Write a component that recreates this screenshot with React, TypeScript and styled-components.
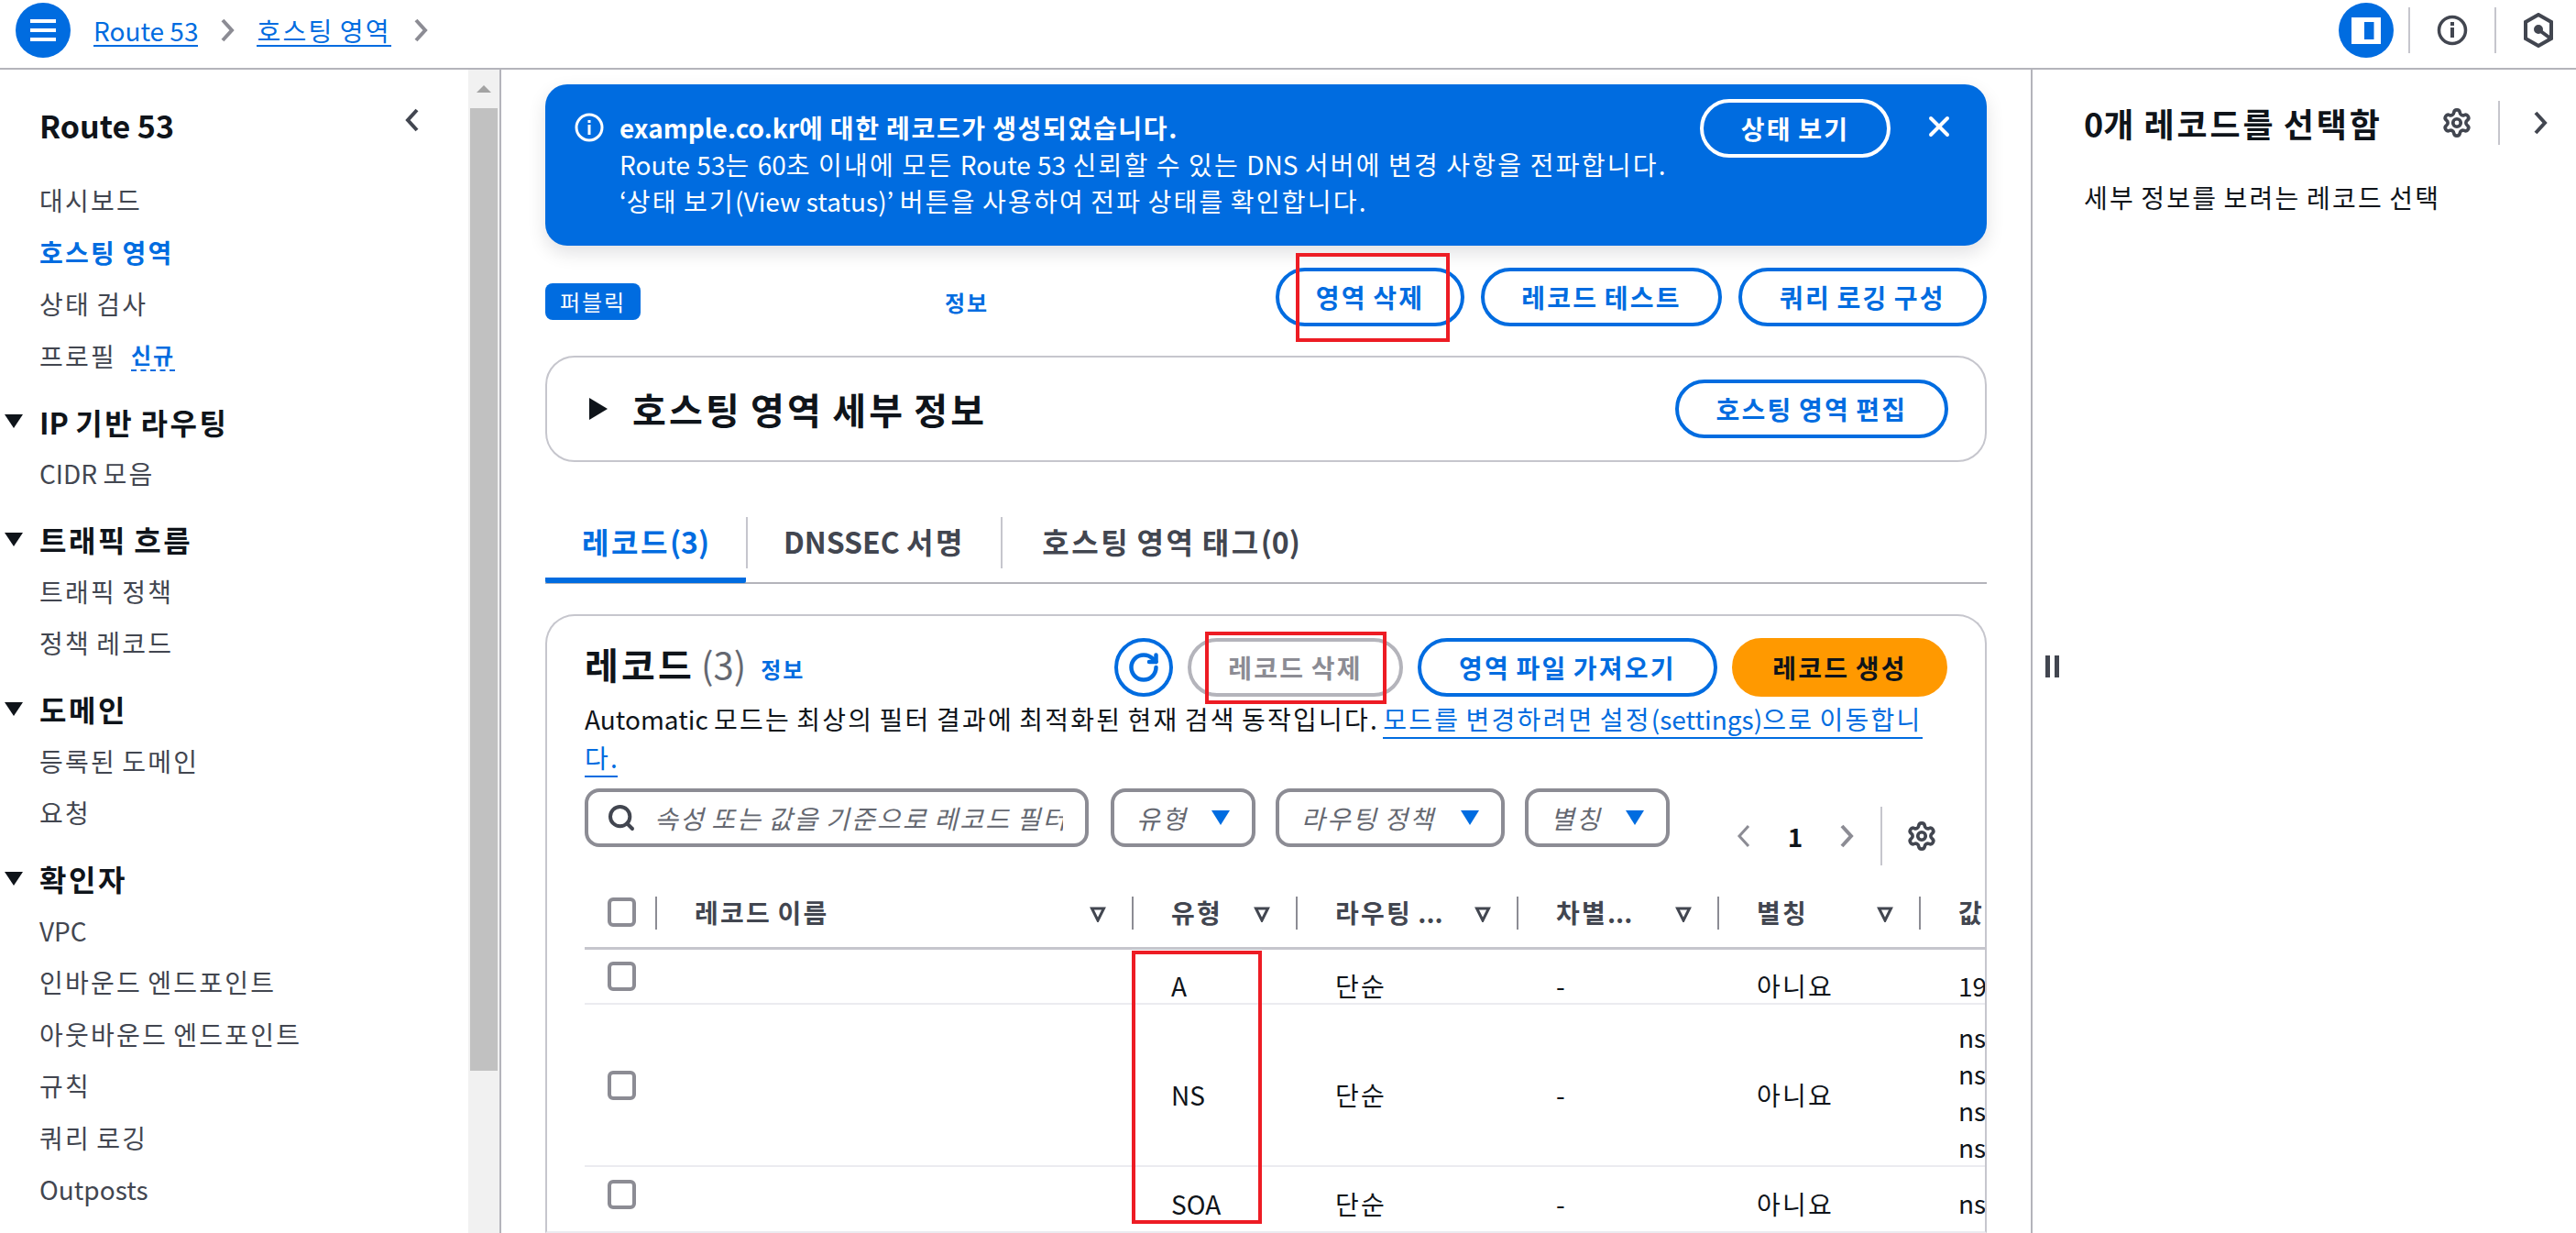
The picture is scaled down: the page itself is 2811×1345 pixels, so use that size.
import React from 'react';
import styled, { createGlobalStyle } from 'styled-components';
import { RotateCw, Search, Settings, X } from 'lucide-react';

const BLUE = '#006ce0';
const INK = '#0f141a';
const SLATE = '#424650';
const LINE = '#b4b4bb';

const GlobalStyle = createGlobalStyle`
    html, body {
        margin: 0;
        height: 100%;
        overflow: hidden;
        background: #fff;
    }
    body {
        font-family: "Noto Sans CJK KR", "Noto Sans", sans-serif;
        font-size: 28px;
        line-height: 40px;
        color: ${INK};
    }
    * { box-sizing: border-box; }
`;

// hangul runs sit wider than the latin ones in this console font
const Hangul = styled.span`
    letter-spacing: 0.08em;
`;

const T = ({ children }: { children: string }) => (
    <span>
        {children.split(/([가-힣]+)/).map((part, i) =>
            i % 2 ? <Hangul key={i}>{part}</Hangul> : part
        )}
    </span>
);

const Page = styled.div`
    width: 2811px;
    height: 1345px;
    display: flex;
    flex-direction: column;
    overflow: hidden;
`;

/* top bar */
const TopBar = styled.header`
    height: 76px;
    flex: none;
    display: flex;
    align-items: flex-start;
    border-bottom: 2px solid ${LINE};
`;

const RoundIcon = styled.div<{ $ml: number }>`
    width: 60px;
    height: 60px;
    margin: 3px 0 0 ${p => p.$ml}px;
    border-radius: 50%;
    background: ${BLUE};
    display: flex;
    align-items: center;
    justify-content: center;
    flex: none;
`;

const Crumbs = styled.nav`
    display: flex;
    align-items: center;
    height: 66px;
    margin-left: 25px;
    color: ${BLUE};
`;

const Crumb = styled.span`
    border-bottom: 2px solid ${BLUE};
    line-height: 32px;
    height: 34px;
    margin-top: 2px;
`;

const CrumbChevron = styled.svg`
    width: 16px;
    height: 28px;
    margin: 0 24px;
`;

const TopRight = styled.div`
    margin-left: auto;
    margin-right: -5px;
    display: flex;
    align-items: flex-start;
`;

const TopDivider = styled.div<{ $ml?: number }>`
    width: 2px;
    height: 50px;
    background: #c6c6cd;
    margin: 8px 0 0 ${p => p.$ml ?? 0}px;
`;

const TopIconSlot = styled.div`
    width: 92px;
    height: 66px;
    display: flex;
    align-items: center;
    justify-content: center;
`;

/* body */
const Body = styled.div`
    flex: 1;
    display: flex;
    min-height: 0;
`;

const Sidebar = styled.aside`
    width: 547px;
    flex: none;
    display: flex;
    border-right: 2px solid ${LINE};
`;

const SideContent = styled.div`
    width: 511px;
    flex: none;
    padding-left: 43px;
`;

const SideHead = styled.div`
    height: 114px;
    padding: 41px 53px 0 0;
    display: flex;
    justify-content: space-between;
    align-items: flex-start;
`;

const SideTitle = styled.div`
    font-size: 34px;
    line-height: 40px;
    font-weight: 700;
`;

const NavItem = styled.div<{ $active?: boolean }>`
    height: 56.5px;
    display: flex;
    align-items: center;
    gap: 16px;
    color: ${p => (p.$active ? BLUE : SLATE)};
    font-weight: ${p => (p.$active ? 700 : 400)};
`;

const NewTag = styled.span`
    color: ${BLUE};
    font-weight: 700;
    font-size: 24px;
    line-height: 32px;
    border-bottom: 2px dashed ${BLUE};
`;

const SectionHead = styled.div`
    position: relative;
    height: 57px;
    margin-top: 15px;
    display: flex;
    align-items: center;
    font-size: 32px;
    font-weight: 700;
`;

const SectionCaret = styled.svg`
    position: absolute;
    left: -38px;
    top: 21px;
    width: 20px;
    height: 15px;
`;

const ScrollTrack = styled.div`
    width: 34px;
    flex: none;
    background: #f1f1f1;
    display: flex;
    flex-direction: column;
    align-items: center;
`;

const ScrollArrow = styled.div`
    width: 0;
    height: 0;
    margin-top: 17px;
    border-left: 8px solid transparent;
    border-right: 8px solid transparent;
    border-bottom: 8px solid #a3a3a3;
`;

const ScrollThumb = styled.div`
    width: 30px;
    height: 1050px;
    margin-top: 17px;
    background: #c1c1c1;
`;

/* main column */
const Main = styled.main`
    width: 1671px;
    flex: none;
    padding: 16px 48px 0 48px;
    overflow: hidden;
    border-right: 2px solid ${LINE};
    position: relative;
`;

const Flash = styled.div`
    height: 176px;
    border-radius: 24px;
    background: ${BLUE};
    color: #fff;
    display: flex;
    padding: 16px 34px 0 32px;
    box-shadow: 0 8px 20px rgba(0, 7, 22, 0.12);
`;

const FlashIcon = styled.svg`
    width: 32px;
    height: 32px;
    margin: 15px 17px 0 0;
    flex: none;
`;

const FlashText = styled.div`
    flex: 1;
    padding-top: 11px;
    line-height: 40px;
    white-space: nowrap;
`;

const FlashTitle = styled.div`
    font-weight: 700;
    ${Hangul} {
        letter-spacing: 0.06em;
    }
`;

const FlashLine = styled.div`
    word-spacing: 1px;
`;

const FlashButton = styled.div`
    width: 208px;
    height: 64px;
    border: 4px solid #fff;
    border-radius: 32px;
    display: flex;
    align-items: center;
    justify-content: center;
    font-weight: 700;
`;

const FlashClose = styled.div`
    margin: 12px 0 0 35px;
    display: flex;
`;

const ActionRow = styled.div`
    display: flex;
    margin-top: 24px;
    height: 64px;
`;

const Badge = styled.div`
    width: 104px;
    height: 40px;
    margin-top: 17px;
    border-radius: 8px;
    background: ${BLUE};
    color: #fff;
    font-size: 24px;
    line-height: 40px;
    text-align: center;
`;

const InfoLink = styled.span<{ $ml: number; $mt: number }>`
    margin: ${p => p.$mt}px 0 0 ${p => p.$ml}px;
    font-size: 24px;
    line-height: 32px;
    font-weight: 700;
    color: ${BLUE};
`;

const ActionButtons = styled.div`
    margin-left: auto;
    display: flex;
    gap: 18px;
`;

const Btn = styled.div<{ $w: number; $tone?: 'normal' | 'disabled' | 'primary' }>`
    position: relative;
    width: ${p => p.$w}px;
    height: 64px;
    flex: none;
    border-radius: 32px;
    border: 4px solid ${p => (p.$tone === 'disabled' ? LINE : p.$tone === 'primary' ? '#ff9900' : BLUE)};
    background: ${p => (p.$tone === 'primary' ? '#ff9900' : '#fff')};
    color: ${p => (p.$tone === 'disabled' ? '#8c8c94' : p.$tone === 'primary' ? INK : BLUE)};
    font-weight: 700;
    white-space: nowrap;
    display: flex;
    align-items: center;
    justify-content: center;
`;

const RedMark = styled.div<{ $l: number; $t: number; $w: number; $h: number }>`
    position: absolute;
    left: ${p => p.$l}px;
    top: ${p => p.$t}px;
    width: ${p => p.$w}px;
    height: ${p => p.$h}px;
    border: 4px solid #ed1c24;
    pointer-events: none;
`;

const DetailsBox = styled.div`
    height: 116px;
    margin-top: 32px;
    border: 2px solid #c6c6cd;
    border-radius: 32px;
    display: flex;
    align-items: center;
    padding: 0 40px 0 46px;
`;

const DetailsCaret = styled.svg`
    width: 20px;
    height: 24px;
    margin-right: 27px;
    flex: none;
`;

const DetailsTitle = styled.div`
    font-size: 40px;
    line-height: 48px;
    font-weight: 700;
    flex: 1;
`;

const Tabs = styled.div`
    height: 89px;
    margin-top: 44px;
    display: flex;
    align-items: flex-start;
    border-bottom: 2px solid ${LINE};
`;

const Tab = styled.div<{ $active?: boolean; $w: number }>`
    width: ${p => p.$w}px;
    height: 88px;
    padding-top: 22px;
    text-align: center;
    font-size: 32px;
    font-weight: 700;
    white-space: nowrap;
    color: ${p => (p.$active ? BLUE : SLATE)};
    border-bottom: 6px solid ${p => (p.$active ? BLUE : 'transparent')};
    border-radius: 0 0 2px 2px;
`;

const TabDivider = styled.div`
    width: 2px;
    height: 56px;
    margin-top: 16px;
    background: #c6c6cd;
`;

const Records = styled.section`
    margin-top: 33px;
    height: 675px;
    border: 2px solid #c6c6cd;
    border-bottom: 2px solid #ebebf0;
    border-radius: 32px 32px 0 0;
    padding: 24px 41px 0 41px;
    overflow: hidden;
    position: relative;
`;

const RecordsHead = styled.div`
    display: flex;
    height: 64px;
    align-items: flex-start;
`;

const RecordsTitle = styled.div`
    font-size: 40px;
    line-height: 56px;
    font-weight: 700;
`;

const Count = styled.span`
    font-weight: 400;
    color: #656871;
    margin-left: 7px;
`;

const RoundBtn = styled.div`
    width: 64px;
    height: 64px;
    flex: none;
    border: 4px solid ${BLUE};
    border-radius: 50%;
    color: ${BLUE};
    display: flex;
    align-items: center;
    justify-content: center;
`;

const HeadButtons = styled.div`
    margin-left: auto;
    display: flex;
    gap: 16px;
`;

const Description = styled.p`
    margin: 3px 0 0;
    width: 1470px;
    font-size: 28px;
    line-height: 42px;
    color: ${INK};
`;

const DescLink = styled.span`
    color: ${BLUE};
    border-bottom: 2px solid ${BLUE};
`;

const FilterRow = styled.div`
    display: flex;
    align-items: flex-start;
    margin-top: 13px;
`;

const FilterBox = styled.div<{ $w: number; $ml: number }>`
    width: ${p => p.$w}px;
    height: 64px;
    margin-left: ${p => p.$ml}px;
    flex: none;
    border: 4px solid #8c8c94;
    border-radius: 16px;
    display: flex;
    align-items: center;
    padding: 0 24px;
    overflow: hidden;
    color: #656871;
    font-style: italic;
    white-space: nowrap;
`;

const SearchBox = styled(FilterBox)`
    padding: 0 24px 0 20px;
`;

const SearchPlaceholder = styled.span`
    margin-left: 20px;
    flex: 1;
    overflow: hidden;
`;

const SelectCaret = styled.svg`
    width: 20px;
    height: 16px;
    margin-left: auto;
    flex: none;
`;

const Pager = styled.div`
    margin: 20px 0 0 73px;
    height: 64px;
    display: flex;
    align-items: center;
    font-weight: 700;
`;

const PagerNum = styled.span`
    width: 96px;
    text-align: center;
`;

const PagerDivider = styled.div`
    width: 2px;
    height: 64px;
    margin-left: 29px;
    background: #c6c6cd;
`;

const PagerGear = styled.div`
    margin-left: 26px;
    display: flex;
    color: ${SLATE};
`;

const TableWrap = styled.div`
    position: relative;
    margin: 12px -41px 0 0;
`;

const COLUMNS = '79px 520px 179px 241px 219px 220px 1fr';

const HeadRow = styled.div`
    height: 80px;
    display: grid;
    grid-template-columns: ${COLUMNS};
    border-bottom: 3px solid #c6c6cd;
`;

const HeadCell = styled.div`
    position: relative;
    padding-left: 41px;
    display: flex;
    align-items: center;
    font-weight: 700;
    color: ${SLATE};
    white-space: nowrap;
    &::after {
        content: '';
        position: absolute;
        left: -2px;
        top: 22px;
        width: 2px;
        height: 36px;
        background: #8c8c94;
    }
`;

const CheckCell = styled.div`
    display: flex;
    align-items: center;
    padding-left: 25px;
`;

const SortIcon = styled.svg`
    position: absolute;
    right: 30px;
    top: 32px;
    width: 18px;
    height: 18px;
`;

const Check = styled.div`
    width: 31px;
    height: 32px;
    border: 4px solid #8c8c94;
    border-radius: 6px;
    flex: none;
`;

const Row = styled.div<{ $h: number; $last?: boolean }>`
    height: ${p => p.$h}px;
    display: grid;
    grid-template-columns: ${COLUMNS};
    border-bottom: ${p => (p.$last ? 'none' : '2px solid #ebebf0')};
`;

const Cell = styled.div`
    align-self: center;
    height: 58px;
    padding: 19px 0 0 41px;
    line-height: 40px;
    white-space: nowrap;
`;

const ValueCell = styled.div<{ $multi?: boolean }>`
    padding: ${p => (p.$multi ? '15px' : '19px')} 0 0 41px;
    line-height: 40px;
    white-space: nowrap;
    overflow: hidden;
`;

/* split panel */
const SplitPanel = styled.aside`
    flex: 1;
    position: relative;
    padding: 34px 0 0 56px;
`;

const SplitHandle = styled.div`
    position: absolute;
    left: 14px;
    top: 639px;
    display: flex;
    gap: 5px;
`;

const HandleBar = styled.div`
    width: 5px;
    height: 24px;
    background: ${SLATE};
`;

const SplitHead = styled.div`
    display: flex;
    align-items: center;
    height: 48px;
`;

const SplitTitle = styled.div`
    font-size: 36px;
    line-height: 44px;
    font-weight: 700;
    white-space: nowrap;
`;

const SplitGear = styled.div`
    margin-left: 64px;
    display: flex;
    color: ${SLATE};
`;

const SplitDivider = styled.div`
    width: 2px;
    height: 48px;
    margin-left: 28px;
    background: #c6c6cd;
`;

const SplitChevron = styled.svg`
    width: 16px;
    height: 28px;
    margin-left: 36px;
`;

const SplitText = styled.p`
    margin: 37px 0 0;
    white-space: nowrap;
`;

const Chevron = ({ color = '#8c8c94' }: { color?: string }) => (
    <path d="M3 3l10 11L3 25" fill="none" stroke={color} strokeWidth="4" />
);

const Caret = () => (
    <SectionCaret viewBox="0 0 20 15">
        <path d="M0 0h20L10 15z" fill={INK} />
    </SectionCaret>
);

const Sort = () => (
    <SortIcon viewBox="0 0 18 18">
        <path d="M2.5 3h13L9 16z" fill="none" stroke={SLATE} strokeWidth="3" />
    </SortIcon>
);

const BlueCaret = () => (
    <SelectCaret viewBox="0 0 20 16">
        <path d="M0 0h20L10 16z" fill={BLUE} />
    </SelectCaret>
);

const sections = [
    { title: 'IP 기반 라우팅', items: ['CIDR 모음'] },
    { title: '트래픽 흐름', items: ['트래픽 정책', '정책 레코드'] },
    { title: '도메인', items: ['등록된 도메인', '요청'] },
    {
        title: '확인자',
        items: ['VPC', '인바운드 엔드포인트', '아웃바운드 엔드포인트', '규칙', '쿼리 로깅', 'Outposts'],
    },
];

const columns = ['라우팅 ...', '차별...', '별칭'];

const rows = [
    { h: 60, type: 'A', value: ['19'] },
    { h: 177, type: 'NS', value: ['ns', 'ns', 'ns', 'ns'] },
    { h: 60, type: 'SOA', value: ['ns'], last: true },
];

const App = (): JSX.Element => {
    return (
        <Page>
            <GlobalStyle />
            <TopBar>
                <RoundIcon $ml={17}>
                    <svg width="28" height="24" viewBox="0 0 28 24">
                        <path d="M0 2h28M0 12h28M0 22h28" stroke="#fff" strokeWidth="4" />
                    </svg>
                </RoundIcon>
                <Crumbs>
                    <Crumb>Route 53</Crumb>
                    <CrumbChevron viewBox="0 0 16 28"><Chevron /></CrumbChevron>
                    <Crumb><T>호스팅 영역</T></Crumb>
                    <CrumbChevron viewBox="0 0 16 28"><Chevron /></CrumbChevron>
                </Crumbs>
                <TopRight>
                    <RoundIcon $ml={0}>
                        <svg width="32" height="29" viewBox="0 0 32 29">
                            <path d="M0 0h32v29H0zM14 5v19h10.500V5z" fill="#fff" fillRule="evenodd" />
                        </svg>
                    </RoundIcon>
                    <TopDivider $ml={16} />
                    <TopIconSlot>
                        <svg width="34" height="34" viewBox="0 0 34 34" fill="none" stroke={SLATE} strokeWidth="3.5">
                            <circle cx="17" cy="17" r="14.5" />
                            <path d="M17 14v11" strokeWidth="4" />
                            <path d="M17 8v4" strokeWidth="4" />
                        </svg>
                    </TopIconSlot>
                    <TopDivider />
                    <TopIconSlot>
                        <svg width="32" height="38" viewBox="0 0 32 38" fill="none" stroke={SLATE} strokeWidth="4">
                            <path d="M16 2l14 8v18l-14 8-14-8V10z" />
                            <circle cx="16" cy="18" r="3" fill={SLATE} />
                            <path d="M17 19l11 8" />
                        </svg>
                    </TopIconSlot>
                </TopRight>
            </TopBar>
            <Body>
                <Sidebar>
                    <SideContent>
                        <SideHead>
                            <SideTitle>Route 53</SideTitle>
                            <svg width="16" height="28" viewBox="0 0 16 28">
                                <path d="M13 3L3 14l10 11" fill="none" stroke={SLATE} strokeWidth="4" />
                            </svg>
                        </SideHead>
                        <NavItem><T>대시보드</T></NavItem>
                        <NavItem $active><T>호스팅 영역</T></NavItem>
                        <NavItem><T>상태 검사</T></NavItem>
                        <NavItem><T>프로필</T> <NewTag><T>신규</T></NewTag></NavItem>
                        {sections.map(s => (
                            <div key={s.title}>
                                <SectionHead><Caret /><T>{s.title}</T></SectionHead>
                                {s.items.map(i => <NavItem key={i}><T>{i}</T></NavItem>)}
                            </div>
                        ))}
                    </SideContent>
                    <ScrollTrack>
                        <ScrollArrow />
                        <ScrollThumb />
                    </ScrollTrack>
                </Sidebar>
                <Main>
                    <Flash>
                        <FlashIcon viewBox="0 0 32 32" fill="none" stroke="#fff" strokeWidth="3">
                            <circle cx="16" cy="16" r="14" />
                            <path d="M16 13v11M16 8v3" />
                        </FlashIcon>
                        <FlashText>
                            <FlashTitle><T>example.co.kr에 대한 레코드가 생성되었습니다.</T></FlashTitle>
                            <FlashLine><T>Route 53는 60초 이내에 모든 Route 53 신뢰할 수 있는 DNS 서버에 변경 사항을 전파합니다.</T></FlashLine>
                            <div><T>‘상태 보기(View status)’ 버튼을 사용하여 전파 상태를 확인합니다.</T></div>
                        </FlashText>
                        <FlashButton><T>상태 보기</T></FlashButton>
                        <FlashClose><X size={36} strokeWidth={2.6} color="#fff" /></FlashClose>
                    </Flash>
                    <ActionRow>
                        <Badge><T>퍼블릭</T></Badge>
                        <InfoLink $ml={332} $mt={22}><T>정보</T></InfoLink>
                        <ActionButtons>
                            <Btn $w={206}>
                                <T>영역 삭제</T>
                                <RedMark $l={18} $t={-20} $w={168} $h={97} />
                            </Btn>
                            <Btn $w={263}><T>레코드 테스트</T></Btn>
                            <Btn $w={271}><T>쿼리 로깅 구성</T></Btn>
                        </ActionButtons>
                    </ActionRow>
                    <DetailsBox>
                        <DetailsCaret viewBox="0 0 20 24"><path d="M0 0l20 12L0 24z" fill={INK} /></DetailsCaret>
                        <DetailsTitle><T>호스팅 영역 세부 정보</T></DetailsTitle>
                        <Btn $w={298}><T>호스팅 영역 편집</T></Btn>
                    </DetailsBox>
                    <Tabs>
                        <Tab $active $w={219}><T>레코드(3)</T></Tab>
                        <TabDivider />
                        <Tab $w={276}><T>DNSSEC 서명</T></Tab>
                        <TabDivider />
                        <Tab $w={368}><T>호스팅 영역 태그(0)</T></Tab>
                    </Tabs>
                    <Records>
                        <RecordsHead>
                            <RecordsTitle><T>레코드</T><Count>(3)</Count></RecordsTitle>
                            <InfoLink $ml={16} $mt={18}><T>정보</T></InfoLink>
                            <HeadButtons>
                                <RoundBtn><RotateCw size={36} strokeWidth={3} /></RoundBtn>
                                <Btn $w={235} $tone="disabled">
                                    <T>레코드 삭제</T>
                                    <RedMark $l={15} $t={-11} $w={198} $h={79} />
                                </Btn>
                                <Btn $w={327}><T>영역 파일 가져오기</T></Btn>
                                <Btn $w={235} $tone="primary"><T>레코드 생성</T></Btn>
                            </HeadButtons>
                        </RecordsHead>
                        <Description>
                            <T>Automatic 모드는 최상의 필터 결과에 최적화된 현재 검색 동작입니다. </T><DescLink><T>모드를 변경하려면 설정(settings)으로 이동합니다.</T></DescLink>
                        </Description>
                        <FilterRow>
                            <SearchBox $w={550} $ml={0}>
                                <Search size={32} strokeWidth={3} color={SLATE} style={{ flex: 'none' }} />
                                <SearchPlaceholder><T>속성 또는 값을 기준으로 레코드 필터링</T></SearchPlaceholder>
                            </SearchBox>
                            <FilterBox $w={158} $ml={24}><T>유형</T><BlueCaret /></FilterBox>
                            <FilterBox $w={250} $ml={22}><T>라우팅 정책</T><BlueCaret /></FilterBox>
                            <FilterBox $w={158} $ml={22}><T>별칭</T><BlueCaret /></FilterBox>
                            <Pager>
                                <svg width="16" height="28" viewBox="0 0 16 28">
                                    <path d="M13 3L3 14l10 11" fill="none" stroke="#8c8c94" strokeWidth="3" />
                                </svg>
                                <PagerNum>1</PagerNum>
                                <svg width="16" height="28" viewBox="0 0 16 28"><Chevron /></svg>
                                <PagerDivider />
                                <PagerGear><Settings size={34} strokeWidth={2.6} /></PagerGear>
                            </Pager>
                        </FilterRow>
                        <TableWrap>
                            <HeadRow>
                                <CheckCell><Check /></CheckCell>
                                <HeadCell><T>레코드 이름</T><Sort /></HeadCell>
                                <HeadCell><T>유형</T><Sort /></HeadCell>
                                {columns.map(c => <HeadCell key={c}><T>{c}</T><Sort /></HeadCell>)}
                                <HeadCell><T>값</T></HeadCell>
                            </HeadRow>
                            {rows.map(r => (
                                <Row key={r.type} $h={r.h} $last={r.last}>
                                    <CheckCell><Check /></CheckCell>
                                    <div />
                                    <Cell>{r.type}</Cell>
                                    <Cell><T>단순</T></Cell>
                                    <Cell>-</Cell>
                                    <Cell><T>아니요</T></Cell>
                                    <ValueCell $multi={r.value.length > 1}>
                                        {r.value.map((v, i) => <div key={i}>{v}</div>)}
                                    </ValueCell>
                                </Row>
                            ))}
                            <RedMark $l={597} $t={81} $w={142} $h={298} />
                        </TableWrap>
                    </Records>
                </Main>
                <SplitPanel>
                    <SplitHandle><HandleBar /><HandleBar /></SplitHandle>
                    <SplitHead>
                        <SplitTitle><T>0개 레코드를 선택함</T></SplitTitle>
                        <SplitGear><Settings size={34} strokeWidth={2.6} /></SplitGear>
                        <SplitDivider />
                        <SplitChevron viewBox="0 0 16 28"><Chevron color={SLATE} /></SplitChevron>
                    </SplitHead>
                    <SplitText><T>세부 정보를 보려는 레코드 선택</T></SplitText>
                </SplitPanel>
            </Body>
        </Page>
    );
};

export default App;
